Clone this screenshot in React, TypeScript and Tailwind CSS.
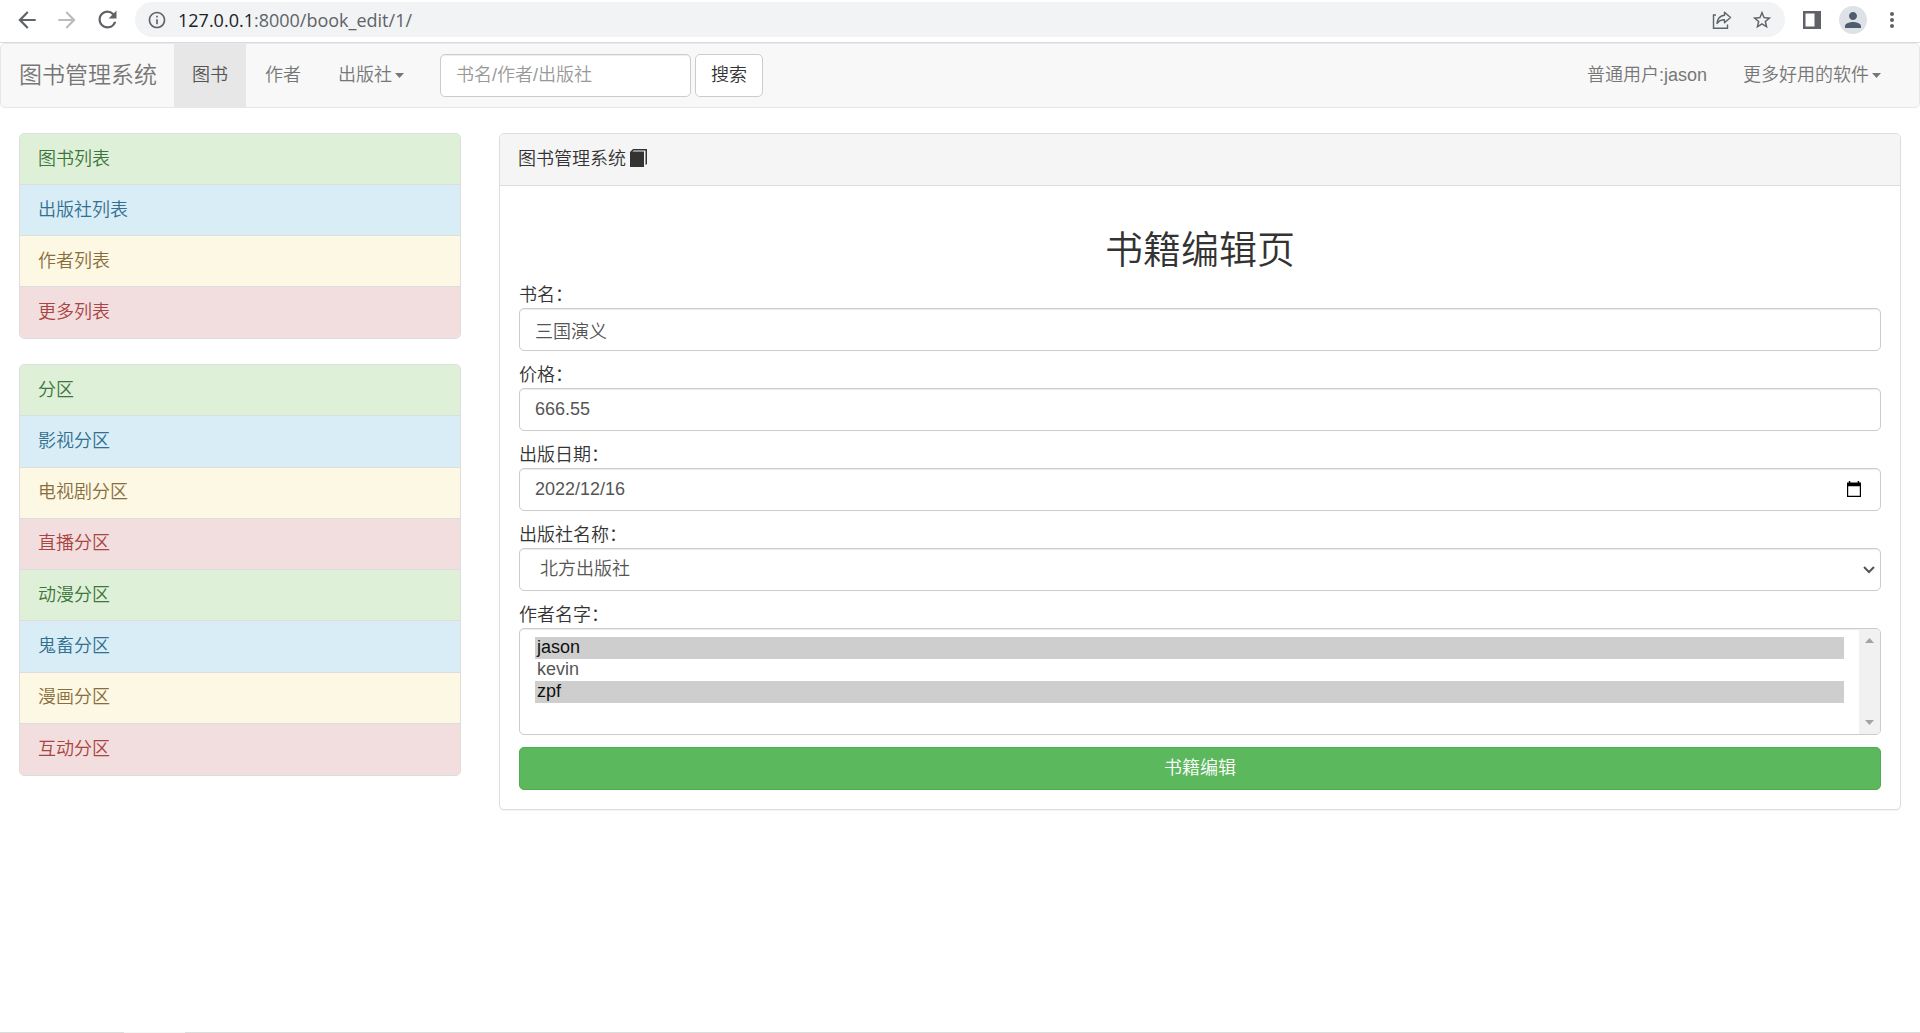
import { useState } from 'react';
import {
    MdArrowBack,
    MdArrowForward,
    MdInfoOutline,
    MdMoreVert,
    MdPerson,
    MdRefresh,
    MdStarBorder,
} from 'react-icons/md';

const itemColors = [
    'bg-[#dff0d8] text-[#3c763d]',
    'bg-[#d9edf7] text-[#31708f]',
    'bg-[#fcf8e3] text-[#8a6d3b]',
    'bg-[#f2dede] text-[#a94442]',
];

const mainMenu = ['图书列表', '出版社列表', '作者列表', '更多列表'];
const zoneMenu = ['分区', '影视分区', '电视剧分区', '直播分区', '动漫分区', '鬼畜分区', '漫画分区', '互动分区'];

const fieldClass =
    'block h-[43px] w-full appearance-none rounded-[5px] border border-[#ccc] bg-white px-[15px] text-[#555] shadow-[inset_0_1px_1px_rgba(0,0,0,0.075)] outline-none';

const Caret = () => (
    <svg className="ml-[3px] shrink-0" width="9" height="5" viewBox="0 0 9 5" fill="currentColor" aria-hidden="true">
        <path d="M0 0h9L4.500 5z" />
    </svg>
);

const BrowserBar = () => (
    <header className="flex h-[43px] items-start border-b border-[#d9dbde] bg-white pt-[2px] text-[#5f6368]">
        <div className="flex h-[35px] w-[135px] shrink-0 items-center gap-[14px] pl-[14px]">
            <button type="button" aria-label="后退"><MdArrowBack size={26} /></button>
            <button type="button" aria-label="前进" className="text-[#babcbe]"><MdArrowForward size={26} /></button>
            <button type="button" aria-label="刷新"><MdRefresh size={27} /></button>
        </div>
        <div className="flex h-[35px] min-w-0 flex-1 items-center rounded-full bg-[#f1f3f4] pr-3 pl-3">
            <MdInfoOutline size={20} className="shrink-0" />
            <p className="flex-1 pl-[11px] font-['Open_Sans','Noto_Sans',sans-serif] text-[18px] leading-6 font-normal">
                <span className="text-[#202124]">127.0.0.1</span>:8000/book_edit/1/
            </p>
            <button type="button" aria-label="分享" className="mr-[19px]">
                <svg width="20" height="20" viewBox="0 0 20 20" fill="none" stroke="currentColor" strokeWidth="1.400">
                    <path d="M4 5H1.500V18.300H15.500V14.500" />
                    <path d="M12.500 2.200L18.500 7.500L12.500 12.800V9.800C9 9.800 6.800 11 5 13.500C5.500 9 8 5.800 12.500 5.300Z" strokeLinejoin="round" />
                </svg>
            </button>
            <button type="button" aria-label="收藏"><MdStarBorder size={22} /></button>
        </div>
        <div className="flex h-[35px] w-[135px] shrink-0 items-center pl-[18px]">
            <button type="button" aria-label="侧边栏">
                <svg width="18" height="18" viewBox="0 0 18 18" fill="currentColor">
                    <path fillRule="evenodd" d="M0 0H18V18H0ZM2.500 2.500V15.500H11.500V2.500Z" />
                </svg>
            </button>
            <button
                type="button"
                aria-label="用户"
                className="ml-[18px] flex h-7 w-7 items-center justify-center rounded-full bg-[#dee1e6] text-[#4f5b6e]"
            >
                <MdPerson size={24} />
            </button>
            <button type="button" aria-label="更多" className="ml-[13px]"><MdMoreVert size={24} /></button>
        </div>
    </header>
);

const Navbar = () => (
    <nav className="flex h-[65px] items-stretch rounded-[5px] border border-[#e7e7e7] bg-[#f8f8f8] text-[#777]">
        <a href="#" className="flex w-[173px] items-center pl-[18px] text-[23px]">图书管理系统</a>
        <a href="#" className="flex items-center bg-[#e7e7e7] px-[18px] text-[#555]">图书</a>
        <a href="#" className="flex items-center px-[19px]">作者</a>
        <a href="#" className="flex items-center px-[18px]">出版社<Caret /></a>
        <form className="ml-[18px] flex items-center gap-1" onSubmit={(e) => e.preventDefault()}>
            <div className="w-[251px]">
                <input aria-label="搜索" className={`${fieldClass} placeholder:text-[#999]`} placeholder="书名/作者/出版社" />
            </div>
            <button type="submit" className="h-[43px] rounded-[5px] border border-[#ccc] bg-white px-[15px] text-[#333]">
                搜索
            </button>
        </form>
        <div className="ml-auto flex pr-5">
            <a href="#" className="flex items-center px-[18px]">普通用户:jason</a>
            <a href="#" className="flex items-center px-[18px]">更多好用的软件<Caret /></a>
        </div>
    </nav>
);

const ListGroup = ({ items, className }: { items: string[]; className: string }) => (
    <div className={`grid auto-rows-fr divide-y divide-[#ddd] overflow-hidden rounded-[5px] border border-[#ddd] ${className}`}>
        {items.map((item, i) => (
            <a key={item} href="#" className={`flex items-center px-[18px] ${itemColors[i % 4]}`}>
                {item}
            </a>
        ))}
    </div>
);

const BookForm = () => {
    const [title, setTitle] = useState('三国演义');
    const [price, setPrice] = useState('666.55');
    const [date, setDate] = useState('2022/12/16');
    const [authors, setAuthors] = useState<string[]>(['jason', 'zpf']);

    return (
        <form className="flex flex-col gap-3" onSubmit={(e) => e.preventDefault()}>
            <div>
                <label htmlFor="title" className="block">书名：</label>
                <input id="title" className={fieldClass} value={title} onChange={(e) => setTitle(e.target.value)} />
            </div>
            <div>
                <label htmlFor="price" className="block">价格：</label>
                <input id="price" className={fieldClass} value={price} onChange={(e) => setPrice(e.target.value)} />
            </div>
            <div>
                <label htmlFor="date" className="block">出版日期：</label>
                <div className="relative">
                    <input id="date" className={fieldClass} value={date} onChange={(e) => setDate(e.target.value)} />
                    <button type="button" aria-label="选择日期" className="absolute top-[13px] right-[20px] text-black">
                        <svg className="block" width="14" height="16" viewBox="0 0 14 16" fill="currentColor">
                            <path fillRule="evenodd" d="M0 1.500H1.800V0H3.300V1.500H10.700V0H12.200V1.500H14V16H0ZM1.200 5.200V14.800H12.800V5.200Z" />
                        </svg>
                    </button>
                </div>
            </div>
            <div>
                <label htmlFor="publish" className="block">出版社名称：</label>
                <div className="relative">
                    <select id="publish" className={`${fieldClass} pl-5`} defaultValue="北方出版社">
                        <option>北方出版社</option>
                    </select>
                    <svg
                        className="pointer-events-none absolute top-[18px] right-[6px] text-[#555]"
                        width="12"
                        height="8"
                        viewBox="0 0 12 8"
                        fill="none"
                        stroke="currentColor"
                        strokeWidth="2"
                    >
                        <path d="M1 1L6 6L11 1" />
                    </svg>
                </div>
            </div>
            <div>
                <label htmlFor="authors" className="block">作者名字：</label>
                <div className="flex h-[107px] overflow-hidden rounded-[5px] border border-[#ccc] shadow-[inset_0_1px_1px_rgba(0,0,0,0.075)]">
                    <select
                        id="authors"
                        multiple
                        className="h-full flex-1 appearance-none overflow-hidden bg-transparent px-[15px] py-2 text-[#555] outline-none"
                        value={authors}
                        onChange={(e) => setAuthors(Array.from(e.target.selectedOptions, (o) => o.value))}
                    >
                        {['jason', 'kevin', 'zpf'].map((name) => (
                            <option key={name} value={name} className="h-[22px] px-[2px] py-0 leading-5">
                                {name}
                            </option>
                        ))}
                    </select>
                    <div className="flex w-[21px] flex-col items-center justify-between bg-[#f1f1f1] py-[9px] text-[#a3a3a3]" aria-hidden="true">
                        <svg width="9" height="5" viewBox="0 0 9 5" fill="currentColor"><path d="M0 5h9L4.500 0z" /></svg>
                        <svg width="9" height="5" viewBox="0 0 9 5" fill="currentColor"><path d="M0 0h9L4.500 5z" /></svg>
                    </div>
                </div>
            </div>
            <button type="submit" className="h-[43px] w-full rounded-[5px] border border-[#4cae4c] bg-[#5cb85c] text-white">
                书籍编辑
            </button>
        </form>
    );
};

const App = () => {
    return (
        <div className="flex min-h-screen flex-col bg-white font-['Liberation_Sans','Noto_Sans_CJK_SC',sans-serif] text-[18px] leading-[25px] font-[350] text-[#333]">
            <BrowserBar />
            <Navbar />
            <div className="flex flex-1 items-start pt-[25px]">
                <aside className="flex w-1/4 flex-col gap-[25px] px-[19px]">
                    <ListGroup items={mainMenu} className="min-h-[206px]" />
                    <ListGroup items={zoneMenu} className="min-h-[412px]" />
                </aside>
                <main className="w-3/4 px-[19px]">
                    <section className="overflow-hidden rounded-[5px] border border-[#ddd] shadow-[0_1px_1px_rgba(0,0,0,0.05)]">
                        <div className="flex h-[52px] items-center gap-1 border-b border-[#ddd] bg-[#f5f5f5] px-[18px]">
                            图书管理系统
                            <svg className="mb-1" width="17" height="18" viewBox="0 0 17 18" fill="currentColor" aria-hidden="true">
                                <path d="M0 3L3 0H17V15L15.500 16V1.500H3.500L2.500 2.500H14V18H0Z" />
                            </svg>
                        </div>
                        <div className="p-[19px]">
                            <h1 className="mt-[25px] mb-3 text-center text-[38px] leading-[41px]">书籍编辑页</h1>
                            <BookForm />
                        </div>
                    </section>
                </main>
            </div>
            <div className="flex h-px">
                <div className="w-[124px] bg-[#dcdcdc]"></div>
                <div className="w-[61px] bg-[#f5f5f5]"></div>
                <div className="flex-1 bg-[#dcdcdc]"></div>
            </div>
        </div>
    );
};

export default App;
